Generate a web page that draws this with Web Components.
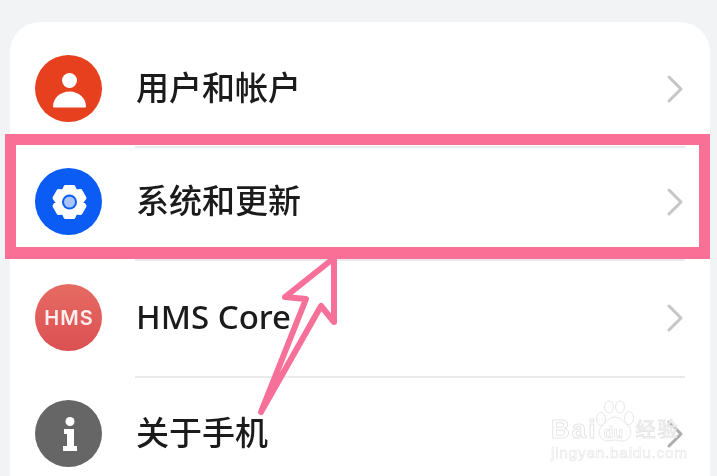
<!DOCTYPE html>
<html lang="zh">
<head>
<meta charset="utf-8">
<title>设置</title>
<style>
  html, body { margin: 0; height: 100%; overflow: hidden; background: #f1f3f5; }
</style>
</head>
<body>
<settings-screen>
  <settings-row label="用户和帐户" height="115">
    <round-icon slot="icon" color="#e7401f">
      <svg viewBox="0 0 66 66" width="66" height="66">
        <circle cx="33.500" cy="24.500" r="7.500" fill="#fff"/>
        <path d="M17 50.500c0-8.500 7.500-15 16.500-15S50 42 50 50.500c0 .6-.5 1-1 1H18c-.5 0-1-.4-1-1z" fill="#fff"/>
      </svg>
    </round-icon>
  </settings-row>
  <settings-row label="系统和更新" height="113" divider nudge="2">
    <round-icon slot="icon" color="#0b5cf5">
      <gear-glyph></gear-glyph>
    </round-icon>
  </settings-row>
  <settings-row label="HMS Core" height="117" divider>
    <round-icon slot="icon" color="linear-gradient(#e66b62, #dc5053)">
      <span style="font: 600 20px Inter, sans-serif; letter-spacing: 1px; color: #fbeeee; margin-left: 1px;">HMS</span>
    </round-icon>
  </settings-row>
  <settings-row label="关于手机" height="115" divider chevron="#adadad">
    <round-icon slot="icon" color="#666666">
      <svg viewBox="0 0 66 66" width="66" height="66" fill="#fff">
        <circle cx="34" cy="20.500" r="4.500"/>
        <path d="M28 28h10v17h3v5H27v-5h4V33h-3z"/>
      </svg>
    </round-icon>
  </settings-row>
</settings-screen>
<highlight-box></highlight-box>
<pink-arrow></pink-arrow>
<baidu-mark></baidu-mark>

<script>
// Page frame with the white rounded card
class SettingsScreen extends HTMLElement {
  constructor() {
    super();
    this.attachShadow({ mode: 'open' });
  }

  connectedCallback() {
    this.shadowRoot.innerHTML = `
      <style>
        :host { display: block; padding: 22px 7px 0 10px; }
        .card {
          background: #fff;
          border-radius: 30px 30px 0 0;
          padding-top: 9px;
          height: 460px;
          overflow: hidden;
          filter: blur(0.4px);
        }
      </style>
      <div class="card"><slot></slot></div>
    `;
  }
}
customElements.define('settings-screen', SettingsScreen);

// One row of the list: icon, label, chevron
class SettingsRow extends HTMLElement {
  constructor() {
    super();
    this.attachShadow({ mode: 'open' });
  }

  connectedCallback() {
    const label = this.getAttribute('label');
    const height = this.getAttribute('height');
    const nudge = this.getAttribute('nudge') || 0;
    const chevron = this.getAttribute('chevron') || '#c6c6c6';

    this.shadowRoot.innerHTML = `
      <style>
        :host { display: block; position: relative; }
        .row {
          height: ${height}px;
          box-sizing: border-box;
          padding: 0 25px;
          padding-bottom: ${nudge}px;
          display: grid;
          grid-template-columns: 67px 1fr 20px;
          column-gap: 34px;
          align-items: center;
        }
        .rule {
          ${this.hasAttribute('divider') ? '' : 'display: none;'}
          height: 2px;
          margin: 0 25px -2px 125px;
          background: #e9eaeb;
        }
        .label {
          font: 500 33px "Noto Sans", "Noto Sans CJK SC", sans-serif;
          color: #1b1b1b;
          line-height: 40px;
          padding-bottom: 2px;
          white-space: nowrap;
        }
        svg { display: block; }
      </style>
      <div class="rule"></div>
      <div class="row">
        <slot name="icon"></slot>
        <span class="label">${label}</span>
        <svg viewBox="0 0 20 30" width="20" height="30">
          <path d="M4 3l12 12L4 27" fill="none" stroke="${chevron}" stroke-width="3" stroke-linecap="round" stroke-linejoin="round"/>
        </svg>
      </div>
    `;
  }
}
customElements.define('settings-row', SettingsRow);

// Coloured disc behind an icon
class RoundIcon extends HTMLElement {
  constructor() {
    super();
    this.attachShadow({ mode: 'open' });
  }

  connectedCallback() {
    const color = this.getAttribute('color');
    this.shadowRoot.innerHTML = `
      <style>
        :host {
          display: flex;
          align-items: center;
          justify-content: center;
          width: 67px;
          height: 67px;
          border-radius: 50%;
          background: ${color};
          overflow: hidden;
        }
      </style>
      <slot></slot>
    `;
  }
}
customElements.define('round-icon', RoundIcon);

// Six tooth gear used in the system row
class GearGlyph extends HTMLElement {
  constructor() {
    super();
    this.attachShadow({ mode: 'open' });
  }

  connectedCallback() {
    const pt = (r, deg) => {
      const a = (deg - 90) * Math.PI / 180;
      return `${(33.5 + r * Math.cos(a)).toFixed(2)} ${(33 + r * Math.sin(a)).toFixed(2)}`;
    };
    let d = '';
    for (let k = 0; k < 6; k++) {
      const t = k * 60;
      d += `${k ? 'L' : 'M'}${pt(15.5, t - 15)} L${pt(15.5, t + 15)} L${pt(12, t + 30)} `;
    }
    this.shadowRoot.innerHTML = `
      <style>
        :host { display: block; width: 66px; height: 66px; }
        svg { display: block; }
      </style>
      <svg viewBox="0 0 66 66" width="66" height="66">
        <path d="${d}Z" fill="#fff" stroke="#fff" stroke-width="4" stroke-linejoin="round"/>
        <circle cx="33.500" cy="33" r="7.500" fill="#0b5cf5"/>
        <circle cx="33.500" cy="33" r="5.500" fill="#a9c5fb"/>
      </svg>
    `;
  }
}
customElements.define('gear-glyph', GearGlyph);

// Pink frame drawn over the second row
class HighlightBox extends HTMLElement {
  constructor() {
    super();
    this.attachShadow({ mode: 'open' });
  }

  connectedCallback() {
    this.shadowRoot.innerHTML = `
      <style>
        :host {
          position: absolute;
          left: 5px;
          top: 134px;
          width: 705px;
          height: 125px;
          box-sizing: border-box;
          border-style: solid;
          border-color: #f96f96;
          border-width: 11px 11px 12px 11px;
        }
      </style>
    `;
  }
}
customElements.define('highlight-box', HighlightBox);

// Hand drawn arrow pointing at the frame
class PinkArrow extends HTMLElement {
  constructor() {
    super();
    this.attachShadow({ mode: 'open' });
  }

  connectedCallback() {
    this.shadowRoot.innerHTML = `
      <style>
        :host { position: absolute; left: 0; top: 0; }
        svg { display: block; }
      </style>
      <svg width="717" height="476" viewBox="0 0 717 476">
        <path d="M261 412 L306 299 L285 297 L334 258 L334 322 L321 306 Z" fill="none" stroke="#f7709a" stroke-width="6" stroke-linejoin="round" stroke-linecap="round"/>
      </svg>
    `;
  }
}
customElements.define('pink-arrow', PinkArrow);

// Faint site watermark, bottom right
class BaiduMark extends HTMLElement {
  constructor() {
    super();
    this.attachShadow({ mode: 'open' });
  }

  connectedCallback() {
    this.shadowRoot.innerHTML = `
      <style>
        :host {
          position: absolute;
          left: 551px;
          top: 400px;
          width: 130px;
          height: 62px;
          display: flex;
          flex-direction: column;
          color: #fff;
          -webkit-text-stroke: 1px #e6e6e6;
          font-family: "Liberation Sans", "Noto Sans CJK SC", sans-serif;
          filter: blur(0.4px);
        }
        .top { display: flex; align-items: flex-end; height: 44px; }
        .word { font-size: 26px; font-weight: 700; line-height: 22px; letter-spacing: 2px; margin-bottom: 4.500px; flex: none; }
        .paw { position: relative; width: 40px; height: 44px; margin-left: -2px; flex: none; }
        .paw svg { display: block; }
        .paw span {
          position: absolute; left: 8px; bottom: 3px;
          font-size: 16px; line-height: 16px; font-weight: 700; -webkit-text-stroke: 0.6px #e0e0e0;
        }
        .cn { font-size: 20px; line-height: 20px; letter-spacing: 2px; font-family: "Noto Sans CJK SC", sans-serif; white-space: nowrap; flex: none; margin-bottom: 5px; }
        .url { font-size: 15.500px; line-height: 14px; margin-top: 1.500px; -webkit-text-stroke: 0.6px #e6e6e6; white-space: nowrap; letter-spacing: 0.7px; }
      </style>
      <div class="top">
        <span class="word">Bai</span>
        <div class="paw">
          <svg width="40" height="44" viewBox="0 0 40 44" fill="#fff" stroke="#e6e6e6" stroke-width="1">
            <ellipse cx="6" cy="19" rx="4.500" ry="6.500"/>
            <ellipse cx="14" cy="7" rx="4.500" ry="6"/>
            <ellipse cx="25" cy="7" rx="4.500" ry="6"/>
            <ellipse cx="34" cy="18" rx="4.500" ry="6.500"/>
            <path d="M20 17c6 0 9 5 13 9 6 6 2 15-6 15-3 0-4-1-7-1s-4 1-7 1c-8 0-12-9-6-15 4-4 7-9 13-9z"/>
          </svg>
          <span>du</span>
        </div>
        <span class="cn">经验</span>
      </div>
      <div class="url">jingyan.baidu.com</div>
    `;
  }
}
customElements.define('baidu-mark', BaiduMark);
</script>
</body>
</html>
